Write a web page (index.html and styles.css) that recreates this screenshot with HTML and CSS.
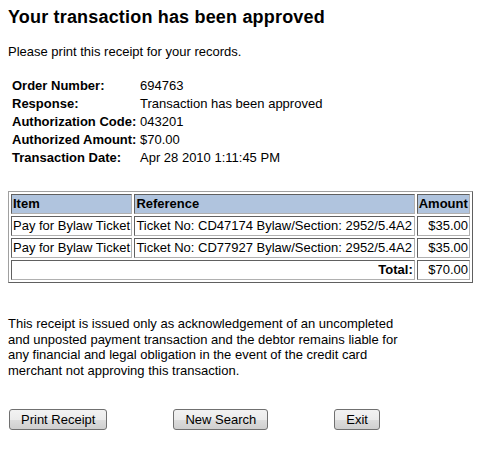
FILE: index.html
```html
<!DOCTYPE html>
<html>
<head>
<meta charset="utf-8">
<title>Receipt</title>
<link rel="stylesheet" href="styles.css">
</head>
<body>
<h1 class="title">Your transaction has been approved</h1>
<p class="intro">Please print this receipt for your records.</p>
<div class="info">
  <div class="label">Order Number:</div><div class="value">694763</div>
  <div class="label">Response:</div><div class="value">Transaction has been approved</div>
  <div class="label">Authorization Code:</div><div class="value">043201</div>
  <div class="label">Authorized Amount:</div><div class="value">$70.00</div>
  <div class="label">Transaction Date:</div><div class="value">Apr 28 2010 1:11:45 PM</div>
</div>
<table class="items">
  <tr class="head">
    <th>Item</th>
    <th>Reference</th>
    <th>Amount</th>
  </tr>
  <tr>
    <td>Pay for Bylaw Ticket</td>
    <td>Ticket No: CD47174 Bylaw/Section: 2952/5.4A2</td>
    <td class="num">$35.00</td>
  </tr>
  <tr>
    <td>Pay for Bylaw Ticket</td>
    <td>Ticket No: CD77927 Bylaw/Section: 2952/5.4A2</td>
    <td class="num">$35.00</td>
  </tr>
  <tr>
    <td colspan="2" class="total">Total:</td>
    <td class="num">$70.00</td>
  </tr>
</table>
<p class="note">This receipt is issued only as acknowledgement of an uncompleted and unposted payment transaction and the debtor remains liable for any financial and legal obligation in the event of the credit card merchant not approving this transaction.</p>
<div class="actions">
  <button class="btn">Print Receipt</button>
  <button class="btn">New Search</button>
  <button class="btn">Exit</button>
</div>
</body>
</html>
```

FILE: styles.css
```css
html, body {
  background: #ffffff;
}
body {
  margin: 0;
  padding: 0 8px;
  font-family: "Liberation Sans", Arial, sans-serif;
  font-size: 13px;
  color: #000000;
}
.title {
  margin: 7px 0 0 0;
  font-size: 18px;
  line-height: 20px;
  font-weight: bold;
  letter-spacing: 0.18px;
}
.intro {
  margin: 17px 0 0 0;
  line-height: 15px;
}
.info {
  margin-top: 18px;
  display: grid;
  grid-template-columns: 128px auto;
  grid-auto-rows: 18px;
  line-height: 18px;
  padding-left: 4px;
}
.label {
  font-weight: bold;
}
.items {
  width: 465px;
  margin-top: 24px;
  border-collapse: separate;
  border-spacing: 2px;
  border: 1px solid;
  border-color: #a0a0a0 #606060 #606060 #a0a0a0;
  font-size: 13px;
}
.items th,
.items td {
  border: 1px solid;
  border-color: #606060 #b0b0b0 #b0b0b0 #606060;
  padding: 1px 1px;
  line-height: 16px;
  white-space: nowrap;
}
.items th {
  background: #b0c4de;
  text-align: left;
  font-weight: bold;
}
.items td.num {
  text-align: right;
}
.items td.total {
  text-align: right;
  font-weight: bold;
}
.note {
  width: 405px;
  margin: 33px 0 0 0;
  line-height: 15.6px;
}
.actions {
  margin-top: 31px;
  display: flex;
  gap: 66px;
  padding-left: 1px;
}
.btn {
  height: 21px;
  padding: 0 11px;
  font-family: "Liberation Sans", Arial, sans-serif;
  font-size: 13px;
  color: #000000;
  border: 1px solid #707070;
  border-radius: 3px;
  background: linear-gradient(#f2f2f2 0%, #ebebeb 50%, #dddddd 51%, #cfcfcf 100%);
}
```
